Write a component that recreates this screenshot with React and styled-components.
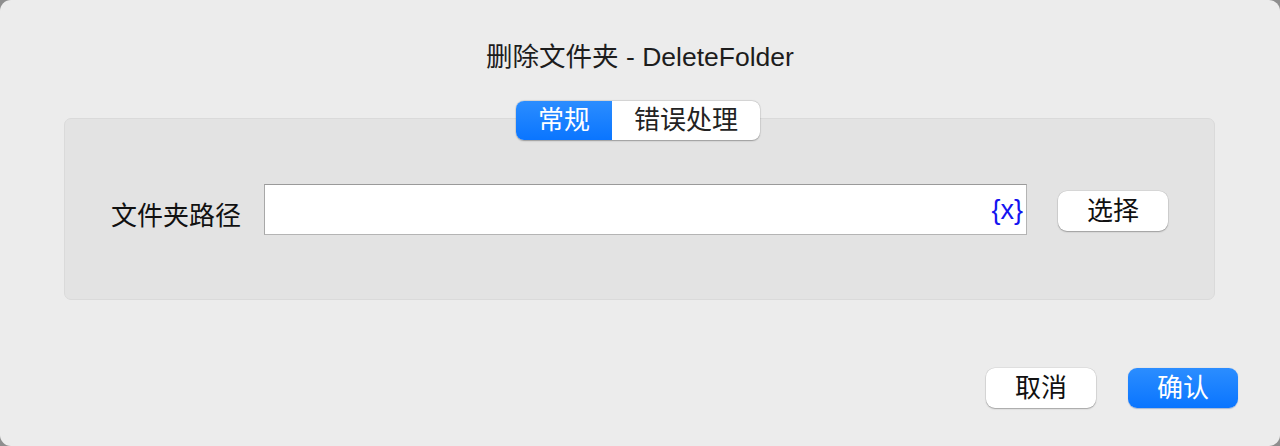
import React from "react";
import styled, { createGlobalStyle } from "styled-components";

const Global = createGlobalStyle`
  html, body { margin: 0; padding: 0; background: #8e8e8e; }
  body { font-family: "Liberation Sans", "Noto Sans CJK SC", sans-serif; }
  * { box-sizing: border-box; }
`;

const Window = styled.div`
  width: 1280px;
  height: 446px;
  background: #ececec;
  border-radius: 11px;
  display: flex;
  flex-direction: column;
  overflow: hidden;
`;

const Title = styled.div`
  margin-top: 41px;
  height: 32px;
  line-height: 32px;
  text-align: center;
  font-size: 26.5px;
  color: #1d1d1d;
`;

const TabsRow = styled.div`
  margin-top: 28px;
  display: flex;
  justify-content: center;
  position: relative;
  z-index: 1;
  padding-right: 4px;
`;

const Segmented = styled.div`
  display: flex;
  height: 39px;
  background: #ffffff;
  border-radius: 8px;
  box-shadow: 0 0.5px 1.5px rgba(0, 0, 0, 0.3), 0 0 0 0.5px rgba(0, 0, 0, 0.08);
  overflow: hidden;
`;

const Segment = styled.div`
  padding: 0 22px;
  display: flex;
  align-items: center;
  font-size: 26px;
  line-height: 39px;
  color: ${(p) => (p.$active ? "#ffffff" : "#222222")};
  background: ${(p) =>
    p.$active ? "linear-gradient(#2b8dff, #0a75ff)" : "transparent"};
`;

const GroupBox = styled.div`
  margin: -22px 65px 0 64px;
  height: 182px;
  background: #e3e3e3;
  border: 1px solid #dadada;
  border-radius: 7px;
  display: flex;
  align-items: flex-start;
  padding: 65px 46px 0 46px;
`;

const Label = styled.div`
  width: 130px;
  flex: none;
  font-size: 26px;
  line-height: 32px;
  margin-top: 16px;
  color: #111111;
`;

const PathField = styled.div`
  margin-left: 23px;
  flex: 1;
  height: 51px;
  background: #ffffff;
  border: 1px solid #b4b4b4;
  border-top-color: #9a9a9a;
  border-left-color: #a8a8a8;
  display: flex;
  align-items: center;
  justify-content: flex-end;
  padding-right: 3px;
`;

const VarToken = styled.span`
  font-size: 27px;
  line-height: 30px;
  color: #1414f0;
`;

const Button = styled.div`
  flex: none;
  width: 110px;
  height: 40px;
  border-radius: 9px;
  display: flex;
  align-items: center;
  justify-content: center;
  font-size: 26px;
  line-height: 32px;
  color: ${(p) => (p.$primary ? "#ffffff" : "#111111")};
  background: ${(p) =>
    p.$primary ? "linear-gradient(#2b8dff, #0a75ff)" : "#ffffff"};
  box-shadow: ${(p) =>
    p.$primary
      ? "0 0.5px 1px rgba(0, 60, 160, 0.3)"
      : "0 1px 1.5px rgba(0, 0, 0, 0.28), 0 0 0 0.5px rgba(0, 0, 0, 0.1)"};
`;

const SelectButton = styled(Button)`
  margin-left: 31px;
  margin-top: 7px;
`;

const Spacer = styled.div`
  flex: 1;
`;

const Footer = styled.div`
  display: flex;
  justify-content: flex-end;
  gap: 32px;
  padding: 0 42px 38px 0;
`;

export default function App() {
  return (
    <>
      <Global />
      <Window>
        <Title>删除文件夹 - DeleteFolder</Title>
        <TabsRow>
          <Segmented>
            <Segment $active>常规</Segment>
            <Segment>错误处理</Segment>
          </Segmented>
        </TabsRow>
        <GroupBox>
          <Label>文件夹路径</Label>
          <PathField>
            <VarToken>{"{x}"}</VarToken>
          </PathField>
          <SelectButton>选择</SelectButton>
        </GroupBox>
        <Spacer />
        <Footer>
          <Button>取消</Button>
          <Button $primary>确认</Button>
        </Footer>
      </Window>
    </>
  );
}
